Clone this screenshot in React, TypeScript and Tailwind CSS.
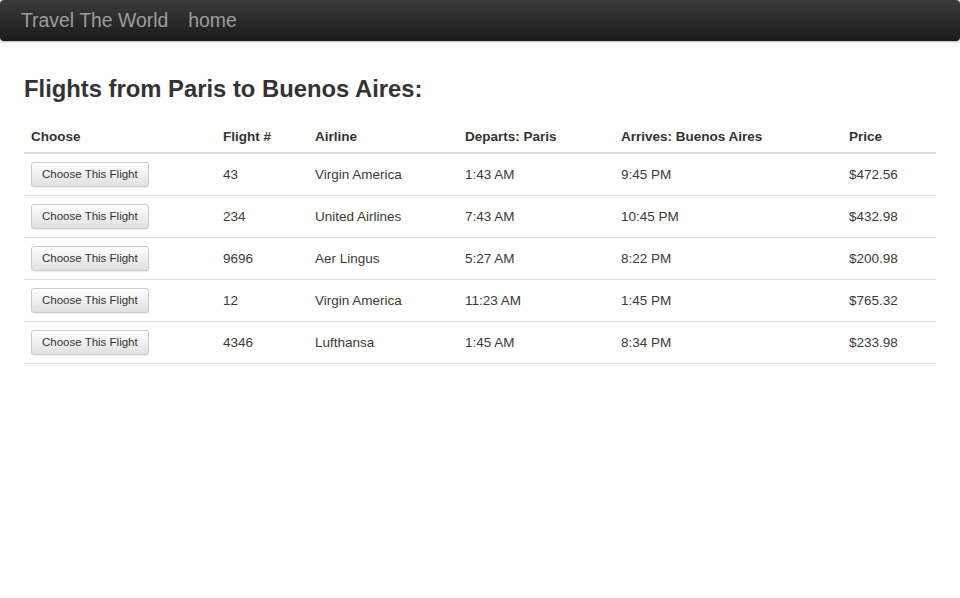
const flights = [
  { num: "43", airline: "Virgin America", departs: "1:43 AM", arrives: "9:45 PM", price: "$472.56" },
  { num: "234", airline: "United Airlines", departs: "7:43 AM", arrives: "10:45 PM", price: "$432.98" },
  { num: "9696", airline: "Aer Lingus", departs: "5:27 AM", arrives: "8:22 PM", price: "$200.98" },
  { num: "12", airline: "Virgin America", departs: "11:23 AM", arrives: "1:45 PM", price: "$765.32" },
  { num: "4346", airline: "Lufthansa", departs: "1:45 AM", arrives: "8:34 PM", price: "$233.98" },
];

export default function App() {
  return (
    <div className="min-h-[598px] bg-white font-['Liberation_Sans',Arial,sans-serif] text-[13.5px] text-[#333]">
      {/* Navbar */}
      <nav className="flex h-[41px] items-center rounded-[4px] bg-gradient-to-b from-[#3c3c3c] to-[#1a1a1a] shadow-[0_1px_2px_rgba(0,0,0,0.3)]">
        <a className="pl-[21px] text-[19.4px] text-[#9d9d9d]" href="#">
          Travel The World
        </a>
        <a className="pl-[20px] text-[19.4px] text-[#9d9d9d]" href="#">
          home
        </a>
      </nav>

      <div className="px-[24px]">
        <h3 className="mt-[34px] mb-[13px] text-[23.8px] font-bold leading-[28px]">
          Flights from Paris to Buenos Aires:
        </h3>

        <table className="w-[912px] table-fixed border-collapse">
          <thead>
            <tr className="border-b-2 border-[#ddd] text-left text-[13.5px]">
              <th className="w-[191px] px-[7px] pt-[11px] pb-[5px] font-bold leading-[20px]">Choose</th>
              <th className="w-[92px] px-[8px] pt-[11px] pb-[5px] font-bold leading-[20px]">Flight #</th>
              <th className="w-[150px] px-[8px] pt-[11px] pb-[5px] font-bold leading-[20px]">Airline</th>
              <th className="w-[156px] px-[8px] pt-[11px] pb-[5px] font-bold leading-[20px]">Departs: Paris</th>
              <th className="w-[228px] px-[8px] pt-[11px] pb-[5px] font-bold leading-[20px]">Arrives: Buenos Aires</th>
              <th className="px-[8px] pt-[11px] pb-[5px] font-bold leading-[20px]">Price</th>
            </tr>
          </thead>
          <tbody className="text-[#3a3a3a]">
            {flights.map((f) => (
              <tr key={f.num} className="border-b border-[#ddd]">
                <td className="px-[7px] py-[8px]">
                  <button className="h-[25px] rounded-[3px] border border-[#ccc] bg-gradient-to-b from-white to-[#e0e0e0] px-[10px] text-[11.5px] text-[#333] shadow-[0_1px_1px_rgba(0,0,0,0.08)]">
                    Choose This Flight
                  </button>
                </td>
                <td className="px-[8px] pt-[9px] pb-[7px]">{f.num}</td>
                <td className="px-[8px] pt-[9px] pb-[7px]">{f.airline}</td>
                <td className="px-[8px] pt-[9px] pb-[7px]">{f.departs}</td>
                <td className="px-[8px] pt-[9px] pb-[7px]">{f.arrives}</td>
                <td className="px-[8px] pt-[9px] pb-[7px]">{f.price}</td>
              </tr>
            ))}
          </tbody>
        </table>
      </div>
    </div>
  );
}
